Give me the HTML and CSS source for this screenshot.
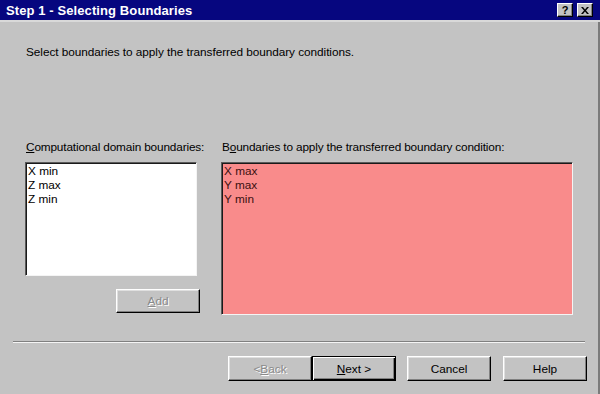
FILE: index.html
```html
<!DOCTYPE html>
<html>

<head>
    <title>Step 1 - Selecting Boundaries</title>
    <link rel="stylesheet" href="styles.css">
</head>

<body>
    <div class="window">
        <div class="titlebar">
            <span class="title">Step 1 - Selecting Boundaries</span>
            <div class="caption-btns">
                <a class="cap-btn help">?</a>
                <a class="cap-btn close">
                    <svg width="8" height="7" viewBox="0 0 8 7">
                        <path d="M0 0h2l2 2.5L6 0h2L5 3.5 8 7H6L4 4.5 2 7H0l3-3.5z" fill="#000" />
                    </svg>
                </a>
            </div>
        </div>

        <div class="main">
            <p class="intro">Select boundaries to apply the transferred boundary conditions.</p>

            <div class="panels">
                <div class="col left">
                    <label class="lbl"><u>C</u>omputational domain boundaries:</label>
                    <ul class="listbox">
                        <li>X min</li>
                        <li>Z max</li>
                        <li>Z min</li>
                    </ul>
                    <a class="btn disabled add"><u>A</u>dd</a>
                </div>
                <div class="col right">
                    <label class="lbl">B<u>o</u>undaries to apply the transferred boundary condition:</label>
                    <ul class="listbox pink">
                        <li>X max</li>
                        <li>Y max</li>
                        <li>Y min</li>
                    </ul>
                </div>
            </div>

            <div class="separator"></div>

            <div class="actions">
                <a class="btn disabled">&lt;<u>B</u>ack</a>
                <a class="btn default"><u>N</u>ext &gt;</a>
                <a class="btn cancel">Cancel</a>
                <a class="btn help-btn">Help</a>
            </div>
        </div>
    </div>
</body>

</html>
```

FILE: styles.css
```css
body {
    margin: 0;
    font-family: "Liberation Sans", Arial, sans-serif;
    font-size: 11.8px;
    color: #000;
    background: #c3c3c3;
}

.window {
    width: 600px;
    height: 394px;
    background: #c3c3c3;
    display: flex;
    flex-direction: column;
}

.titlebar {
    height: 20px;
    background: #06067f;
    border-bottom: 2px solid #d9d9d9;
    display: flex;
    align-items: center;
    justify-content: space-between;
    padding: 0 7px 0 6px;
}

.title {
    color: #fff;
    font-weight: bold;
    font-size: 13px;
    letter-spacing: 0.1px;
}

.caption-btns {
    display: flex;
    gap: 4px;
}

.cap-btn {
    width: 16px;
    height: 14px;
    box-sizing: border-box;
    background: #c3c3c3;
    border: 1px solid;
    border-color: #fff #000 #000 #fff;
    box-shadow: inset -1px -1px 0 #808080;
    display: flex;
    align-items: center;
    justify-content: center;
    font-weight: bold;
    font-size: 11px;
    line-height: 1;
}

.main {
    flex: 1;
    border-right: 2px solid #7b7b7b;
}

.intro {
    margin: 0;
    padding: 23px 0 0 26px;
    line-height: 14px;
    letter-spacing: -0.05px;
}

.panels {
    display: flex;
    gap: 21px;
    margin-top: 81px;
    padding-left: 25px;
}

.col {
    display: flex;
    flex-direction: column;
}

.left {
    width: 175px;
}

.right {
    width: 352px;
}

.lbl {
    line-height: 14px;
    padding-left: 1px;
    margin-bottom: 8px;
    white-space: nowrap;
    letter-spacing: -0.15px;
}

.listbox {
    list-style: none;
    margin: 0;
    padding: 1px 2px;
    box-sizing: border-box;
    background: #fff;
    border: 1px solid;
    border-color: #5a5a5a #f4f4f4 #f4f4f4 #5a5a5a;
    box-shadow: inset 1px 1px 0 #1a1a1a;
    line-height: 14px;
}

.left .listbox {
    width: 172px;
    height: 114px;
}

.listbox.pink {
    height: 153px;
    background: #f98b8b;
    color: #3b1010;
}

.btn {
    display: flex;
    align-items: center;
    justify-content: center;
    box-sizing: border-box;
    width: 84px;
    height: 25px;
    background: #c3c3c3;
    border: 1px solid;
    border-color: #fff #000 #000 #fff;
    box-shadow: inset -1px -1px 0 #808080, inset 1px 1px 0 #dfdfdf;
    color: #000;
    text-decoration: none;
}

.btn.disabled {
    color: #8a8a8a;
    text-shadow: 1px 1px 0 #fff;
}

.btn.add {
    align-self: flex-end;
    height: 24px;
    margin-top: 13px;
}

.btn.default {
    border: 1px solid #000;
    box-shadow: inset 1px 1px 0 #fff, inset -1px -1px 0 #000, inset -2px -2px 0 #808080;
}

.separator {
    margin: 26px 0 0 13px;
    width: 572px;
    height: 1px;
    background: #808080;
    border-bottom: 1px solid #f4f4f4;
}

.actions {
    display: flex;
    padding-left: 228px;
    margin-top: 13px;
}

.btn.cancel {
    margin-left: 11px;
}

.btn.help-btn {
    margin-left: 12px;
}
```
